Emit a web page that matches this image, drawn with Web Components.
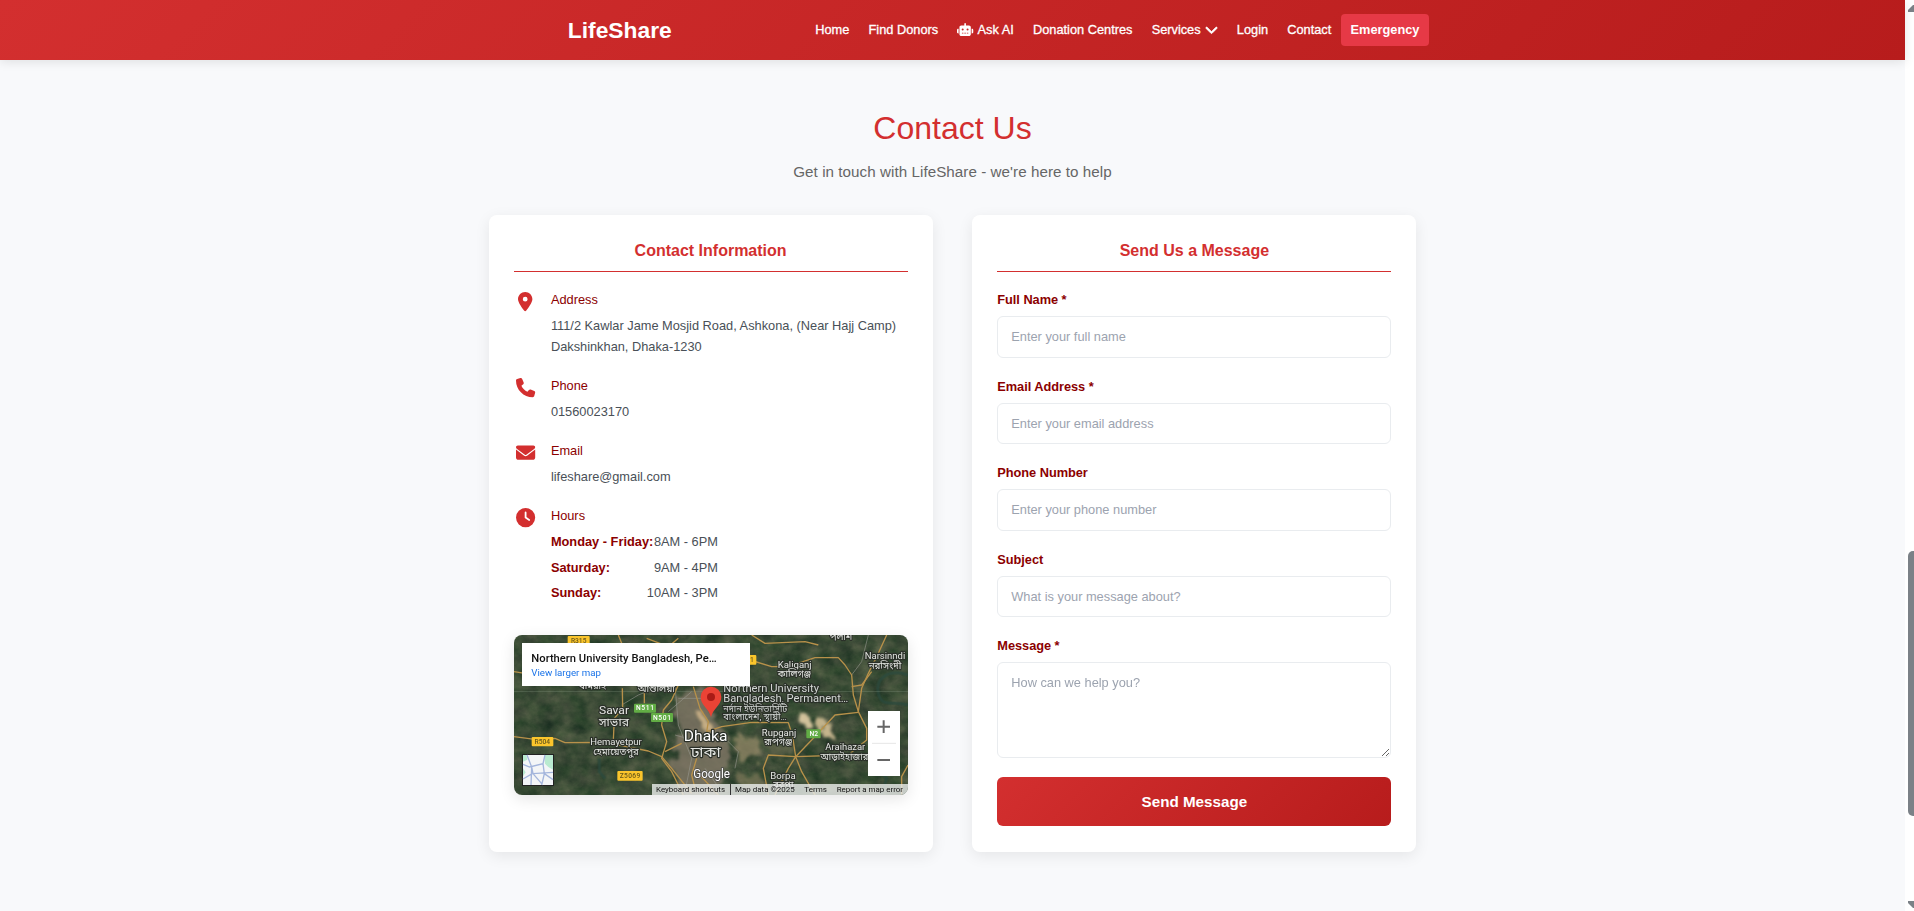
<!DOCTYPE html>
<html lang="en">
<head>
<meta charset="utf-8">
<title>LifeShare - Contact Us</title>
<style>
html,body{margin:0;height:100%;overflow:hidden}
body{font-family:"Liberation Sans",Arial,sans-serif;font-size:12.8px;background:#f8f9fb;color:#495057}
</style>
</head>
<body>
<life-page></life-page>
<script>
const define=(name,html)=>customElements.define(name,class extends HTMLElement{
  constructor(){super();this.attachShadow({mode:'open'}).innerHTML=html;}
});

const ICONS={
  pin:['0 0 384 512','M215.7 499.2C267 435 384 279.4 384 192C384 86 298 0 192 0S0 86 0 192c0 87.4 117 243 168.3 307.2c12.3 15.3 35.1 15.3 47.4 0zM192 128a64 64 0 1 1 0 128 64 64 0 1 1 0-128z'],
  phone:['0 0 512 512','M164.9 24.6c-7.7-18.6-28-28.5-47.4-23.2l-88 24C12.1 30.2 0 46 0 64C0 311.4 200.6 512 448 512c18 0 33.8-12.1 38.6-29.5l24-88c5.3-19.4-4.6-39.7-23.2-47.4l-96-40c-16.3-6.8-35.2-2.1-46.3 11.6L304.7 368C234.3 334.7 177.3 277.7 144 207.3L193.3 167c13.7-11.2 18.4-30 11.6-46.3l-40-96z'],
  envelope:['0 0 512 512','M48 64C21.5 64 0 85.5 0 112c0 15.1 7.1 29.3 19.2 38.4L236.8 313.6c11.4 8.5 27 8.5 38.4 0L492.8 150.4c12.1-9.1 19.2-23.3 19.2-38.4c0-26.5-21.5-48-48-48H48zM0 176V384c0 35.3 28.7 64 64 64H448c35.3 0 64-28.7 64-64V176L294.4 339.2c-22.8 17.1-54 17.1-76.8 0L0 176z'],
  clock:['0 0 512 512','M256 0a256 256 0 1 1 0 512A256 256 0 1 1 256 0zM232 120V256c0 8 4 15.5 10.7 20l96 64c11 7.4 25.9 4.4 33.3-6.7s4.4-25.9-6.7-33.3L280 243.2V120c0-13.3-10.7-24-24-24s-24 10.7-24 24z'],
  robot:['0 0 640 512','M320 0c17.7 0 32 14.3 32 32V96H472c39.8 0 72 32.2 72 72V440c0 39.8-32.2 72-72 72H168c-39.8 0-72-32.2-72-72V168c0-39.8 32.2-72 72-72H288V32c0-17.7 14.3-32 32-32zM208 384c-8.800 0-16 7.200-16 16s7.200 16 16 16h32c8.800 0 16-7.200 16-16s-7.200-16-16-16H208zm96 0c-8.800 0-16 7.200-16 16s7.200 16 16 16h32c8.800 0 16-7.200 16-16s-7.200-16-16-16H304zm96 0c-8.800 0-16 7.200-16 16s7.200 16 16 16h32c8.800 0 16-7.200 16-16s-7.200-16-16-16H400zM264 256a40 40 0 1 0-80 0 40 40 0 1 0 80 0zm152 40a40 40 0 1 0 0-80 40 40 0 1 0 0 80zM48 224H64V416H48c-26.500 0-48-21.500-48-48V272c0-26.500 21.500-48 48-48zm544 0c26.500 0 48 21.500 48 48v96c0 26.500-21.500 48-48 48H576V224h16z'],
  chevron:['0 0 512 512','M233.400 406.600c12.500 12.500 32.800 12.500 45.300 0l192-192c12.500-12.500 12.500-32.800 0-45.300s-32.800-12.500-45.300 0L256 338.700 86.600 169.400c-12.500-12.500-32.800-12.500-45.300 0s-12.500 32.800 0 45.300l192 192z']
};
customElements.define('life-icon',class extends HTMLElement{
  connectedCallback(){
    const [box,d]=ICONS[this.getAttribute('name')];
    this.attachShadow({mode:'open'}).innerHTML=`<style>:host{display:inline-flex;height:1em;color:inherit}svg{height:100%;display:block;overflow:visible}:host([name=chevron]) path{stroke:currentColor;stroke-width:26}</style><svg viewBox="${box}" fill="currentColor"><path fill-rule="evenodd" d="${d}"/></svg>`;
  }
});

define('nav-link',`<style>
:host{display:flex;align-items:center;gap:4px;height:32px;box-sizing:border-box;padding:0 9.6px 2px;color:#fff;font-size:12.8px;letter-spacing:-.01px;white-space:nowrap;-webkit-text-stroke:.3px #fff}
:host([urgent]){background:#e63946;border-radius:4px;font-weight:700;-webkit-text-stroke:0}
</style><slot></slot>`);

define('life-header',`<style>
:host{display:flex;align-items:center;height:60px;box-sizing:border-box;padding:0 476px 0 567.800px;justify-content:space-between;background:linear-gradient(135deg,#d32f2f,#b71c1c);box-shadow:0 2px 10px rgba(0,0,0,.1);position:relative}
.brand{color:#fff;font-weight:700;font-size:22.8px;line-height:60px}
nav{display:flex}
</style><div class="brand">LifeShare</div>
<nav><nav-link>Home</nav-link><nav-link>Find Donors</nav-link><nav-link><life-icon name="robot" style="font-size:13px"></life-icon>Ask AI</nav-link><nav-link>Donation Centres</nav-link><nav-link>Services<life-icon name="chevron" style="font-size:13px"></life-icon></nav-link><nav-link>Login</nav-link><nav-link>Contact</nav-link><nav-link urgent>Emergency</nav-link></nav>`);

define('life-card',`<style>
:host{display:block;box-sizing:border-box;height:637px;padding:25px;background:#fff;border-radius:8px;box-shadow:0 4px 15px rgba(0,0,0,.08)}
h2{margin:0 0 18px;height:31px;line-height:22px;border-bottom:1px solid #d32f2f;color:#d32f2f;font-size:16px;text-align:center}
</style><h2><slot name="title"></slot></h2><slot></slot>`);

define('info-item',`<style>
:host{display:grid;grid-template-columns:24px 1fr;column-gap:13.300px;margin-bottom:18.700px}
.ico{display:flex;justify-content:center;font-size:19.2px;color:#d32f2f;height:20px;padding-top:2px}
.t{color:#8b0000;line-height:20.5px;height:20.5px;margin-bottom:5.500px}
.b{line-height:20.5px}
</style><div class="ico"><slot name="icon"></slot></div><div><div class="t"><slot name="label"></slot></div><div class="b"><slot></slot></div></div>`);

define('hours-row',`<style>
:host{display:flex;justify-content:space-between;width:167px;height:20.5px;margin-bottom:5px;white-space:nowrap}
b{color:#8b0000}
</style><b><slot name="day"></slot></b><span><slot></slot></span>`);

customElements.define('form-field',class extends HTMLElement{
  connectedCallback(){
    const area=this.hasAttribute('area'),ph=this.getAttribute('placeholder');
    this.attachShadow({mode:'open'}).innerHTML=`<style>
:host{display:block;height:86.5px}
:host([area]){height:141px}
label{display:block;height:26.3px;line-height:20.5px;font-weight:700;color:#8b0000;letter-spacing:-.04px}
input,textarea{display:block;box-sizing:border-box;width:100%;height:41.600px;padding:0 13px 1px;border:1px solid #e9ecef;border-radius:6px;background:#fff;font:12.8px "Liberation Sans",Arial,sans-serif;outline:0}
textarea{height:96px;padding:12px 13px;resize:vertical}
::placeholder{color:#9ca3af;opacity:1}
</style><label>${this.getAttribute('label')}</label>${area?`<textarea placeholder="${ph}"></textarea>`:`<input placeholder="${ph}">`}`;
  }
});

define('send-button',`<style>
:host{display:block}
button{display:block;width:100%;height:49px;border:0;border-radius:6px;background:linear-gradient(135deg,#d32f2f,#b71c1c);color:#fff;font:700 15.2px "Liberation Sans",Arial,sans-serif}
</style><button><slot></slot></button>`);

define('place-map',`<style>
:host{display:block;height:160px;border-radius:8px;overflow:hidden}
svg{display:block;width:100%;height:100%}
</style>
<svg viewBox="27 30 1182 480">
<defs>
<filter id="land" x="0" y="0" width="100%" height="100%" color-interpolation-filters="sRGB"><feTurbulence type="fractalNoise" baseFrequency=".02 .025" numOctaves="6" seed="8"/><feColorMatrix values=".26 .08 0 0 .06  .17 .12 0 0 .15  .17 .05 0 0 .1  0 0 0 0 1"/></filter>
<filter id="soft" x="-30%" y="-30%" width="160%" height="160%"><feTurbulence type="fractalNoise" baseFrequency=".03" numOctaves="4" seed="3"/><feDisplacementMap in="SourceGraphic" scale="60"/><feGaussianBlur stdDeviation="4"/></filter>
</defs>
<rect x="27" y="30" width="1182" height="480" filter="url(#land)"/>
<g filter="url(#soft)" transform="translate(14 14)">
<path d="M500 190L590 180 610 270 660 320 650 420 610 510H530L490 420 505 330Z" fill="#857a69" opacity=".75"/>
<path d="M555 240l25 10 30 55-15 10z" fill="#d5ba8c" opacity=".85"/>
<path d="M670 320l80 5 10 55-70 20z" fill="#a39470" opacity=".65"/>
<path d="M865 245l30 10 20 45-30-5z" fill="#e2cea6" opacity=".9"/>
<path d="M920 260l35 10 20 55-45-10z" fill="#dcc79b" opacity=".85"/>
<path d="M690 430l70 10 20 40-80 0z" fill="#a0906b" opacity=".5"/>
<path d="M760 330l80 -10 20 60-60 10z" fill="#8c8262" opacity=".35"/>
</g>
<g fill="none" stroke="#2b4a3e" stroke-width="9" opacity=".75"><path d="M1209 150C1150 130 1110 160 1120 205S1160 225 1209 240M1130 510L1145 460 1120 430M283 400V440L300 460"/></g>
<path d="M27 200H1209" stroke="#8a9a86" opacity=".5" stroke-width="2"/>
<g fill="none" stroke="#9a9a90" stroke-width="2.500" opacity=".7"><path d="M510 180L520 300 560 400 540 500M450 190L400 210 350 240M490 260L560 200M640 320L700 380 690 430M520 220H590M510 330L580 350M600 430L650 500M1040 150L1070 110 1090 30"/></g>
<g fill="none" stroke="#b8914a" stroke-width="4" stroke-linejoin="round">
<path d="M27 335L90 343 150 340 180 353 270 352 350 362 430 378 470 395 500 430 560 505"/>
<path d="M340 30L350 55M352 190L353 250 328 280 325 345"/>
<path d="M520 180L500 225 475 255 470 300 485 350 470 400 500 440 520 480 535 510"/>
<path d="M565 185L585 250 610 290 605 320 650 305 740 292 850 293 862 330 872 395"/>
<path d="M735 105L800 125 850 125 930 98 1000 98 1020 120 1040 150 1045 210 1060 260"/>
<path d="M1145 30L1120 85 1090 145 1070 190 1060 260 1085 310 1085 345 1030 390 872 395"/>
<path d="M27 140L60 145M1040 185L1070 180 1100 140"/>
<path d="M790 510L775 430 790 390 872 395 920 345 990 270 1060 262"/>
<path d="M872 395L890 440 930 510M872 395L850 430 810 510"/>
<path d="M480 380L530 355M575 400L560 450 570 490M575 440L640 510M425 40L490 65 520 40M740 30L780 55 900 50 940 60M1209 420L1190 455 1190 510M418 190V235"/>
</g>
<g font-family="Roboto,sans-serif" text-anchor="middle" font-size="20" font-weight="500">
<g fill="#fbc52c"><rect x="188" y="33" width="66" height="26" rx="3"/><rect x="700" y="90" width="54" height="29" rx="3"/><rect x="80" y="336" width="65" height="28" rx="3"/><rect x="337" y="438" width="76" height="29" rx="3"/></g>
<g fill="#69591b"><text x="221" y="53">R315</text><text x="741" y="111">1</text><text x="112" y="357">R504</text><text x="375" y="460" textLength="62">Z5069</text></g>
<g fill="#62ad45"><rect x="387" y="236" width="66" height="27" rx="3"/><rect x="438" y="264" width="66" height="27" rx="3"/><rect x="904" y="313" width="43" height="27" rx="3"/></g>
<g fill="#fff"><text x="420" y="256" textLength="54">N511</text><text x="471" y="285" textLength="54">N501</text><text x="926" y="334">N2</text></g>
</g>
<g font-family='Roboto,"Noto Sans Bengali","Noto Sans",sans-serif' font-size="29" fill="#e4e6e2" stroke="#2b3029" stroke-width="7" paint-order="stroke" stroke-linejoin="round" text-anchor="middle">
<text x="869" y="128" textLength="102" lengthAdjust="spacingAndGlyphs">Kaliganj</text><text x="868" y="157" textLength="100" lengthAdjust="spacingAndGlyphs">কালিগঞ্জ</text>
<text x="1140" y="103" textLength="122" lengthAdjust="spacingAndGlyphs">Narsinndi</text><text x="1140" y="131" textLength="98" lengthAdjust="spacingAndGlyphs">নরসিংদী</text>
<text x="327" y="268" font-size="34" textLength="90" lengthAdjust="spacingAndGlyphs">Savar</text><text x="327" y="303" font-size="33" textLength="90" lengthAdjust="spacingAndGlyphs">সাভার</text>
<text x="333" y="360" textLength="155" lengthAdjust="spacingAndGlyphs">Hemayetpur</text><text x="333" y="389" textLength="136" lengthAdjust="spacingAndGlyphs">হেমায়েতপুর</text>
<text x="602" y="347" font-size="45" fill="#fff" textLength="131" lengthAdjust="spacingAndGlyphs">Dhaka</text><text x="602" y="395" font-size="45" textLength="90" lengthAdjust="spacingAndGlyphs">ঢাকা</text>
<text x="822" y="332" textLength="103" lengthAdjust="spacingAndGlyphs">Rupganj</text><text x="820" y="360" textLength="84" lengthAdjust="spacingAndGlyphs">রূপগঞ্জ</text>
<text x="1021" y="376" textLength="120" lengthAdjust="spacingAndGlyphs">Araihazar</text><text x="1018" y="405" textLength="143" lengthAdjust="spacingAndGlyphs">আড়াইহাজার</text>
<text x="834" y="462" textLength="76" lengthAdjust="spacingAndGlyphs">Borpa</text><text x="835" y="490" textLength="60" lengthAdjust="spacingAndGlyphs">বরপা</text>
<text x="1008" y="44" textLength="68" lengthAdjust="spacingAndGlyphs">পলাশ</text><text x="263" y="191" textLength="80" lengthAdjust="spacingAndGlyphs">ধামরাই</text><text x="454" y="202" textLength="112" lengthAdjust="spacingAndGlyphs">আশুলিয়া</text>
<g text-anchor="start" fill="#d3d7d4" font-size="32"><text x="655" y="200" textLength="287" lengthAdjust="spacingAndGlyphs">Northern University</text><text x="655" y="232" textLength="375" lengthAdjust="spacingAndGlyphs">Bangladesh, Permanent…</text><text x="655" y="260" font-size="27" textLength="192" lengthAdjust="spacingAndGlyphs">নর্দান ইউনিভার্সিটি</text><text x="655" y="286" font-size="27" textLength="190" lengthAdjust="spacingAndGlyphs">বাংলাদেশ, স্থায়ী…</text></g>
</g>
<path d="M618 277C612 250 587 242 587 216A31 31 0 0 1 649 216C649 242 624 250 618 277Z" fill="#ea4335"/><circle cx="618" cy="216" r="12" fill="#a91b16"/>
<rect x="51" y="54" width="684" height="129" fill="#fff"/>
<g font-family="Roboto,sans-serif"><text x="79" y="110" font-size="34" font-weight="500" fill="#111" textLength="556" lengthAdjust="spacingAndGlyphs">Northern University Bangladesh, Pe…</text><text x="79" y="153" font-size="28.500" fill="#1a73e8" textLength="209" lengthAdjust="spacingAndGlyphs">View larger map</text></g>
<rect x="1089" y="258" width="96" height="195" fill="#fff"/><path d="M1101 355H1173" stroke="#e6e6e6" stroke-width="3"/><path d="M1117 305H1155M1136 286V324M1117 405H1155" stroke="#666" stroke-width="6"/>
<g><rect x="51" y="387" width="96" height="96" fill="#222"/><rect x="54" y="390" width="90" height="90" fill="#f3f5f7"/><path d="M118 390h26v44l-14-8-10-10zM54 390h10l3 14-13 6zM54 430l8 12-8 12z" fill="#b9ead0"/><path d="M66 390l14 36-2 54M54 418l20 8 40-10 6-26M80 426l4 20 60-4M54 462l28-16M114 416l4 30-8 34M84 446l26 30M118 446l26 18" stroke="#a3b5dc" stroke-width="4" fill="none"/></g>
<text x="620" y="458" font-family="Roboto,sans-serif" font-size="36" fill="#fff" stroke="#444" stroke-width="4" paint-order="stroke" text-anchor="middle" textLength="110" lengthAdjust="spacingAndGlyphs">Google</text>
<rect x="441" y="477" width="768" height="33" fill="#e9ece9" opacity=".82"/><rect x="675" y="477" width="3" height="33" fill="#333"/>
<g font-family="Roboto,sans-serif" font-size="24" fill="#111"><text x="453" y="501" textLength="207" lengthAdjust="spacingAndGlyphs">Keyboard shortcuts</text><text x="690" y="501" textLength="179" lengthAdjust="spacingAndGlyphs">Map data ©2025</text><text x="898" y="501" textLength="68" lengthAdjust="spacingAndGlyphs">Terms</text><text x="995" y="501" textLength="199" lengthAdjust="spacingAndGlyphs">Report a map error</text></g>
</svg>`);

define('scroll-rail',`<style>
:host{display:flex;flex-direction:column;align-items:flex-end;width:9px;height:911px;background:#fff;overflow:hidden}
svg{display:block;width:6px;height:8px;flex:none}
.thumb{width:6px;height:265px;flex:none;background:#7b8187;border-radius:5px 0 0 5px}
.a{height:551px;flex:none;box-sizing:border-box;padding-top:4px}
.b{height:95px;display:flex;align-items:flex-end}
</style><div class="a"><svg viewBox="0 0 6 8"><path d="M0 8L0 6 5 1H6V8Z" fill="#7b8187"/></svg></div><div class="thumb"></div><div class="b"><svg viewBox="0 0 6 8" style="margin-bottom:3px"><path d="M0 1H6V8H5L0 3Z" fill="#7b8187"/></svg></div>`);

define('life-page',`<style>
:host{display:flex;width:1914px;height:911px;overflow:hidden}
.main{width:1905px;background:#f8f9fb}
.intro{text-align:center;padding-top:44px;height:111px}
h1{margin:0;font-weight:400;font-size:32px;line-height:48px;color:#d32f2f}
p{margin:8px 0 0;font-size:15.2px;letter-spacing:.05px;line-height:24px;color:#666}
.cols{display:grid;grid-template-columns:444px 444.200px;gap:39.700px;padding-left:488.600px}
place-map{margin-top:31px;box-shadow:0 4px 15px rgba(0,0,0,.1)}
</style>
<div class="main">
<life-header></life-header>
<div class="intro"><h1>Contact Us</h1><p>Get in touch with LifeShare - we're here to help</p></div>
<div class="cols">
<life-card><span slot="title">Contact Information</span>
<info-item><life-icon slot="icon" name="pin"></life-icon><span slot="label">Address</span>111/2 Kawlar Jame Mosjid Road, Ashkona, (Near Hajj Camp)<br>Dakshinkhan, Dhaka-1230</info-item>
<info-item><life-icon slot="icon" name="phone"></life-icon><span slot="label">Phone</span>01560023170</info-item>
<info-item><life-icon slot="icon" name="envelope"></life-icon><span slot="label">Email</span>lifeshare@gmail.com</info-item>
<info-item><life-icon slot="icon" name="clock"></life-icon><span slot="label">Hours</span><hours-row><span slot="day">Monday - Friday:</span>8AM - 6PM</hours-row><hours-row><span slot="day">Saturday:</span>9AM - 4PM</hours-row><hours-row style="margin-bottom:0"><span slot="day">Sunday:</span>10AM - 3PM</hours-row></info-item>
<place-map></place-map>
</life-card>
<life-card><span slot="title">Send Us a Message</span>
<form-field label="Full Name *" placeholder="Enter your full name"></form-field>
<form-field label="Email Address *" placeholder="Enter your email address"></form-field>
<form-field label="Phone Number" placeholder="Enter your phone number"></form-field>
<form-field label="Subject" placeholder="What is your message about?"></form-field>
<form-field area label="Message *" placeholder="How can we help you?"></form-field>
<send-button>Send Message</send-button>
</life-card>
</div>
</div>
<scroll-rail></scroll-rail>`);
</script>
</body>
</html>
